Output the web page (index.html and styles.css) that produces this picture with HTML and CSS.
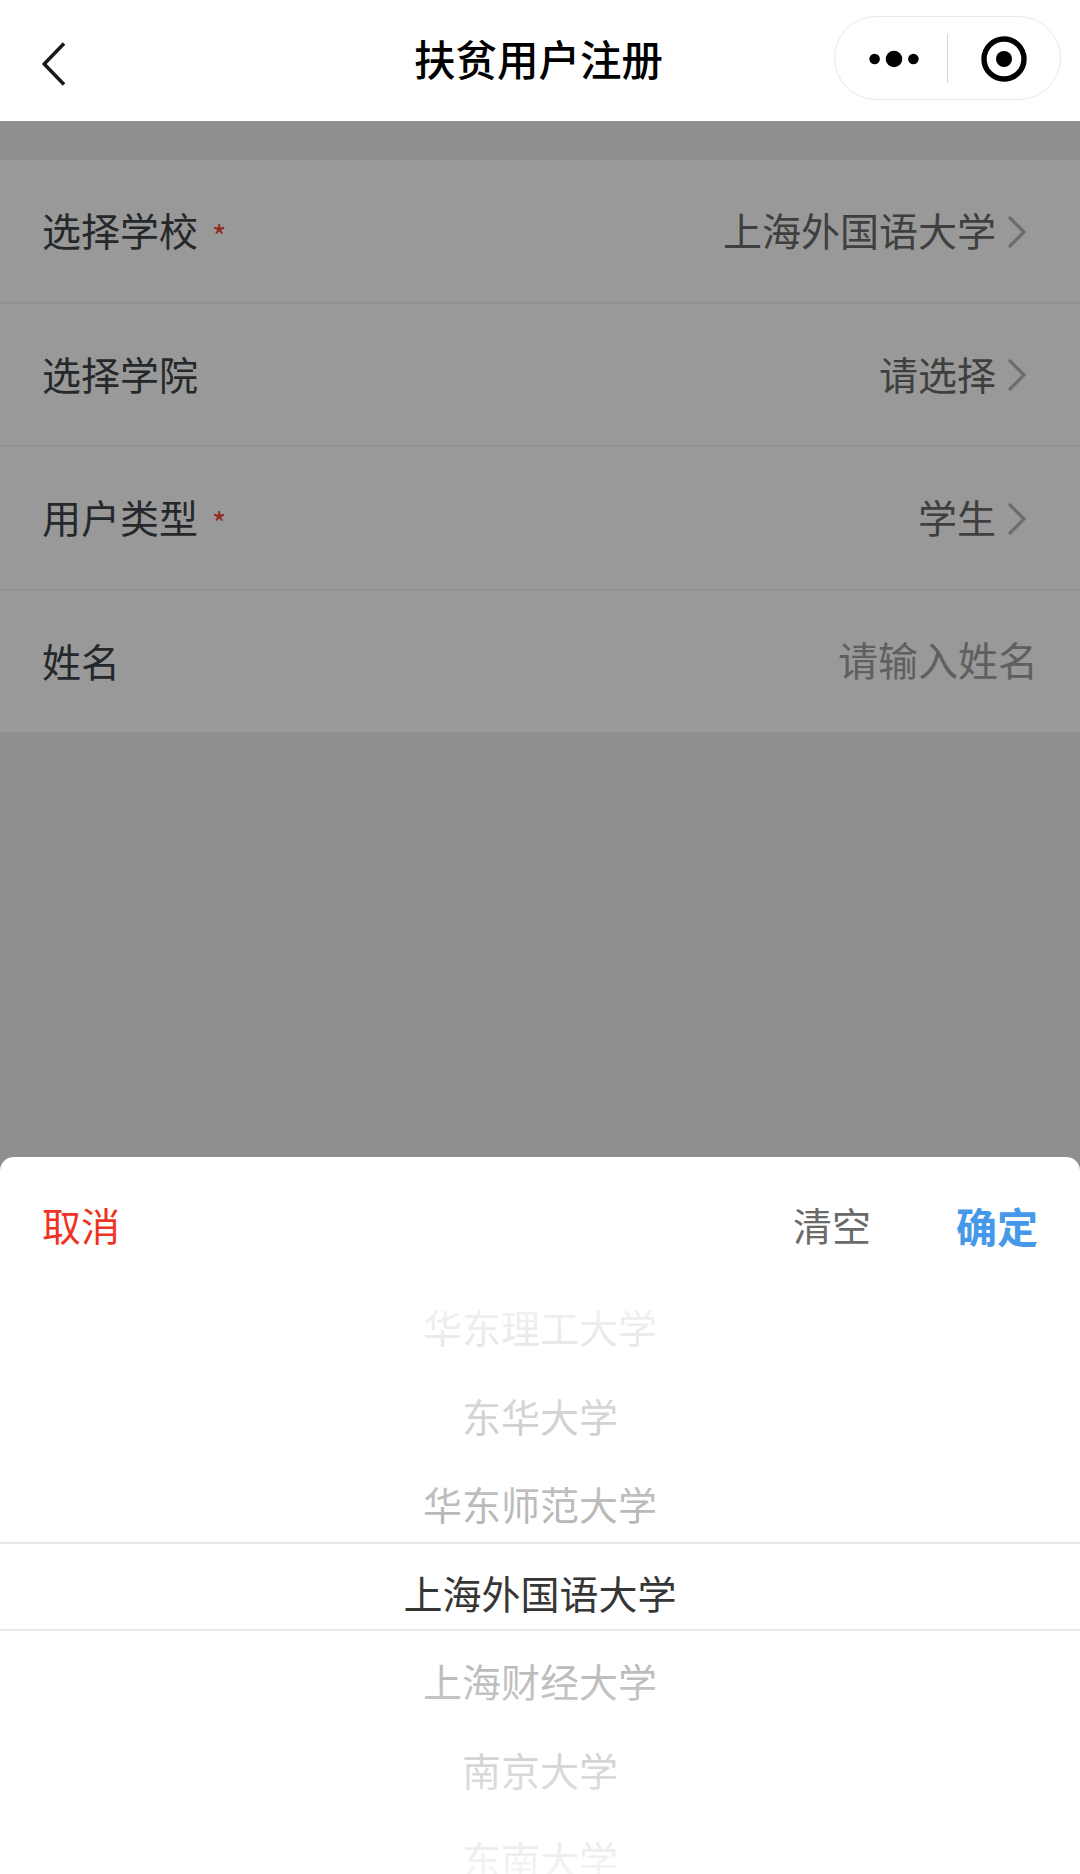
FILE: index.html
```
<!DOCTYPE html>
<html lang="zh-CN">
<head>
    <meta charset="UTF-8">
    <link rel="stylesheet" href="styles.css">
    <title>扶贫用户注册</title>
</head>
<body>
    <div class="navbar">
        <svg class="back" width="24" height="46" viewBox="0 0 24 46">
            <path d="M22 2.5 L2.2 23 L22 43.5" fill="none" stroke="#1a1a1a" stroke-width="3.6"/>
        </svg>
        <div class="title">扶贫用户注册</div>
        <div class="capsule">
            <svg class="dots" width="50" height="18" viewBox="0 0 50 18">
                <circle cx="5.6" cy="9" r="5.3"/>
                <circle cx="25" cy="9" r="8.3"/>
                <circle cx="44.4" cy="9" r="5.3"/>
            </svg>
            <span class="capsule-line"></span>
            <svg class="target" width="46" height="46" viewBox="0 0 46 46">
                <circle cx="23" cy="23" r="20" fill="none" stroke="#000" stroke-width="5.4"/>
                <circle cx="23" cy="23" r="8"/>
            </svg>
        </div>
    </div>

    <div class="page">
        <div class="form">
            <div class="form-item">
                <div class="label">选择学校<span class="required">*</span></div>
                <div class="value">上海外国语大学</div>
                <svg class="arrow" width="18" height="32" viewBox="0 0 18 32"><path d="M2 2 L16 16 L2 30"/></svg>
            </div>
            <div class="form-item">
                <div class="label">选择学院</div>
                <div class="value">请选择</div>
                <svg class="arrow" width="18" height="32" viewBox="0 0 18 32"><path d="M2 2 L16 16 L2 30"/></svg>
            </div>
            <div class="form-item">
                <div class="label">用户类型<span class="required">*</span></div>
                <div class="value">学生</div>
                <svg class="arrow" width="18" height="32" viewBox="0 0 18 32"><path d="M2 2 L16 16 L2 30"/></svg>
            </div>
            <div class="form-item">
                <div class="label">姓名</div>
                <div class="placeholder">请输入姓名</div>
            </div>
        </div>

        <!-- Dark mask with the school picker on top -->
        <div class="mask">
            <div class="popup">
                <div class="popup-header">
                    <span class="cancel">取消</span>
                    <span class="clear">清空</span>
                    <span class="confirm">确定</span>
                </div>
                <div class="picker">
                    <div class="option">华东理工大学</div>
                    <div class="option">东华大学</div>
                    <div class="option">华东师范大学</div>
                    <div class="option">上海外国语大学</div>
                    <div class="option">上海财经大学</div>
                    <div class="option">南京大学</div>
                    <div class="option">东南大学</div>
                    <div class="picker-mask">
                        <div class="fade-top"></div>
                        <div class="indicator"></div>
                        <div class="fade-bottom"></div>
                    </div>
                </div>
            </div>
        </div>
    </div>
</body>
</html>
```
FILE: styles.css
```
* {
    box-sizing: border-box;
}

body {
    margin: 0;
    height: 1874px;
    display: flex;
    flex-direction: column;
    overflow: hidden;
    background-color: #ffffff;
    font-family: "Noto Sans CJK SC", sans-serif;
    font-size: 39px;
    line-height: 1;
}

/* Top bar */
.navbar {
    height: 121px;
    flex-shrink: 0;
    display: grid;
    grid-template-columns: 1fr auto 1fr;
    align-items: center;
    padding: 0 19px;
}

.back {
    margin-top: 6px;
    margin-left: 23px;
}

.title {
    font-size: 41.5px;
    font-weight: 500;
    color: #000000;
    margin-top: -4px;
    margin-right: 3px;
}

.capsule {
    justify-self: end;
    width: 227px;
    height: 84px;
    margin-top: -5px;
    border: 1px solid #e9e9e9;
    border-radius: 42px;
    display: flex;
    align-items: center;
    padding: 1px 33px 0 34px;
}

.capsule-line {
    width: 1px;
    height: 49px;
    margin-left: 28px;
    background-color: #d4d4d4;
}

.target {
    margin-left: auto;
}

/* Form behind the mask */
.page {
    flex: 1;
    position: relative;
    background-color: #efefef;
    padding-top: 39px;
}

.form-item {
    height: 143.5px;
    padding: 2px 43px 0 42px;
    display: flex;
    align-items: center;
    background-color: #ffffff;
    border-bottom: 2px solid #f2f2f2;
}

.label {
    flex: 1;
    display: flex;
    align-items: center;
    margin-top: -4px;
    color: #3f4449;
}

.required {
    margin-left: 14px;
    padding-top: 12px;
    font-size: 31px;
    color: #f5483f;
}

.value {
    margin-top: -4px;
    color: #6a6a6a;
}

.arrow {
    margin: 0 11px 0 12px;
}

.arrow path {
    fill: none;
    stroke: #b4b4b4;
    stroke-width: 3.2;
    stroke-linecap: round;
}

.placeholder {
    margin-top: -6px;
    margin-right: -1px;
    font-size: 40px;
    color: #9f9f9f;
}

/* Popup */
.mask {
    position: absolute;
    inset: 0;
    display: flex;
    flex-direction: column;
    justify-content: flex-end;
    background-color: rgba(0, 0, 0, 0.4);
}

.popup {
    height: 717px;
    background-color: #ffffff;
    border-radius: 14px 14px 0 0;
    overflow: hidden;
}

.popup-header {
    height: 117px;
    padding: 20px 42px 0;
    display: flex;
    align-items: center;
}

.cancel {
    flex: 1;
    margin-top: -2px;
    color: #ee3324;
}

.clear {
    margin-top: -2px;
    color: #6a6a6a;
}

.confirm {
    margin-left: 85px;
    font-size: 41px;
    font-weight: bold;
    color: #4699e9;
}

.picker {
    position: relative;
    height: 625px;
    padding-top: 8px;
}

.option {
    height: 88.6px;
    line-height: 88.6px;
    text-align: center;
    color: #363636;
}

.picker-mask {
    position: absolute;
    inset: 0;
    display: flex;
    flex-direction: column;
}

.fade-top,
.fade-bottom {
    flex: 1;
    background: linear-gradient(180deg, rgba(255, 255, 255, 0.98), rgba(255, 255, 255, 0.61));
}

.fade-bottom {
    background: linear-gradient(0deg, rgba(255, 255, 255, 0.98), rgba(255, 255, 255, 0.61));
}

.indicator {
    height: 89px;
    border-top: 2px solid #e8e8e8;
    border-bottom: 2px solid #e8e8e8;
}
```
